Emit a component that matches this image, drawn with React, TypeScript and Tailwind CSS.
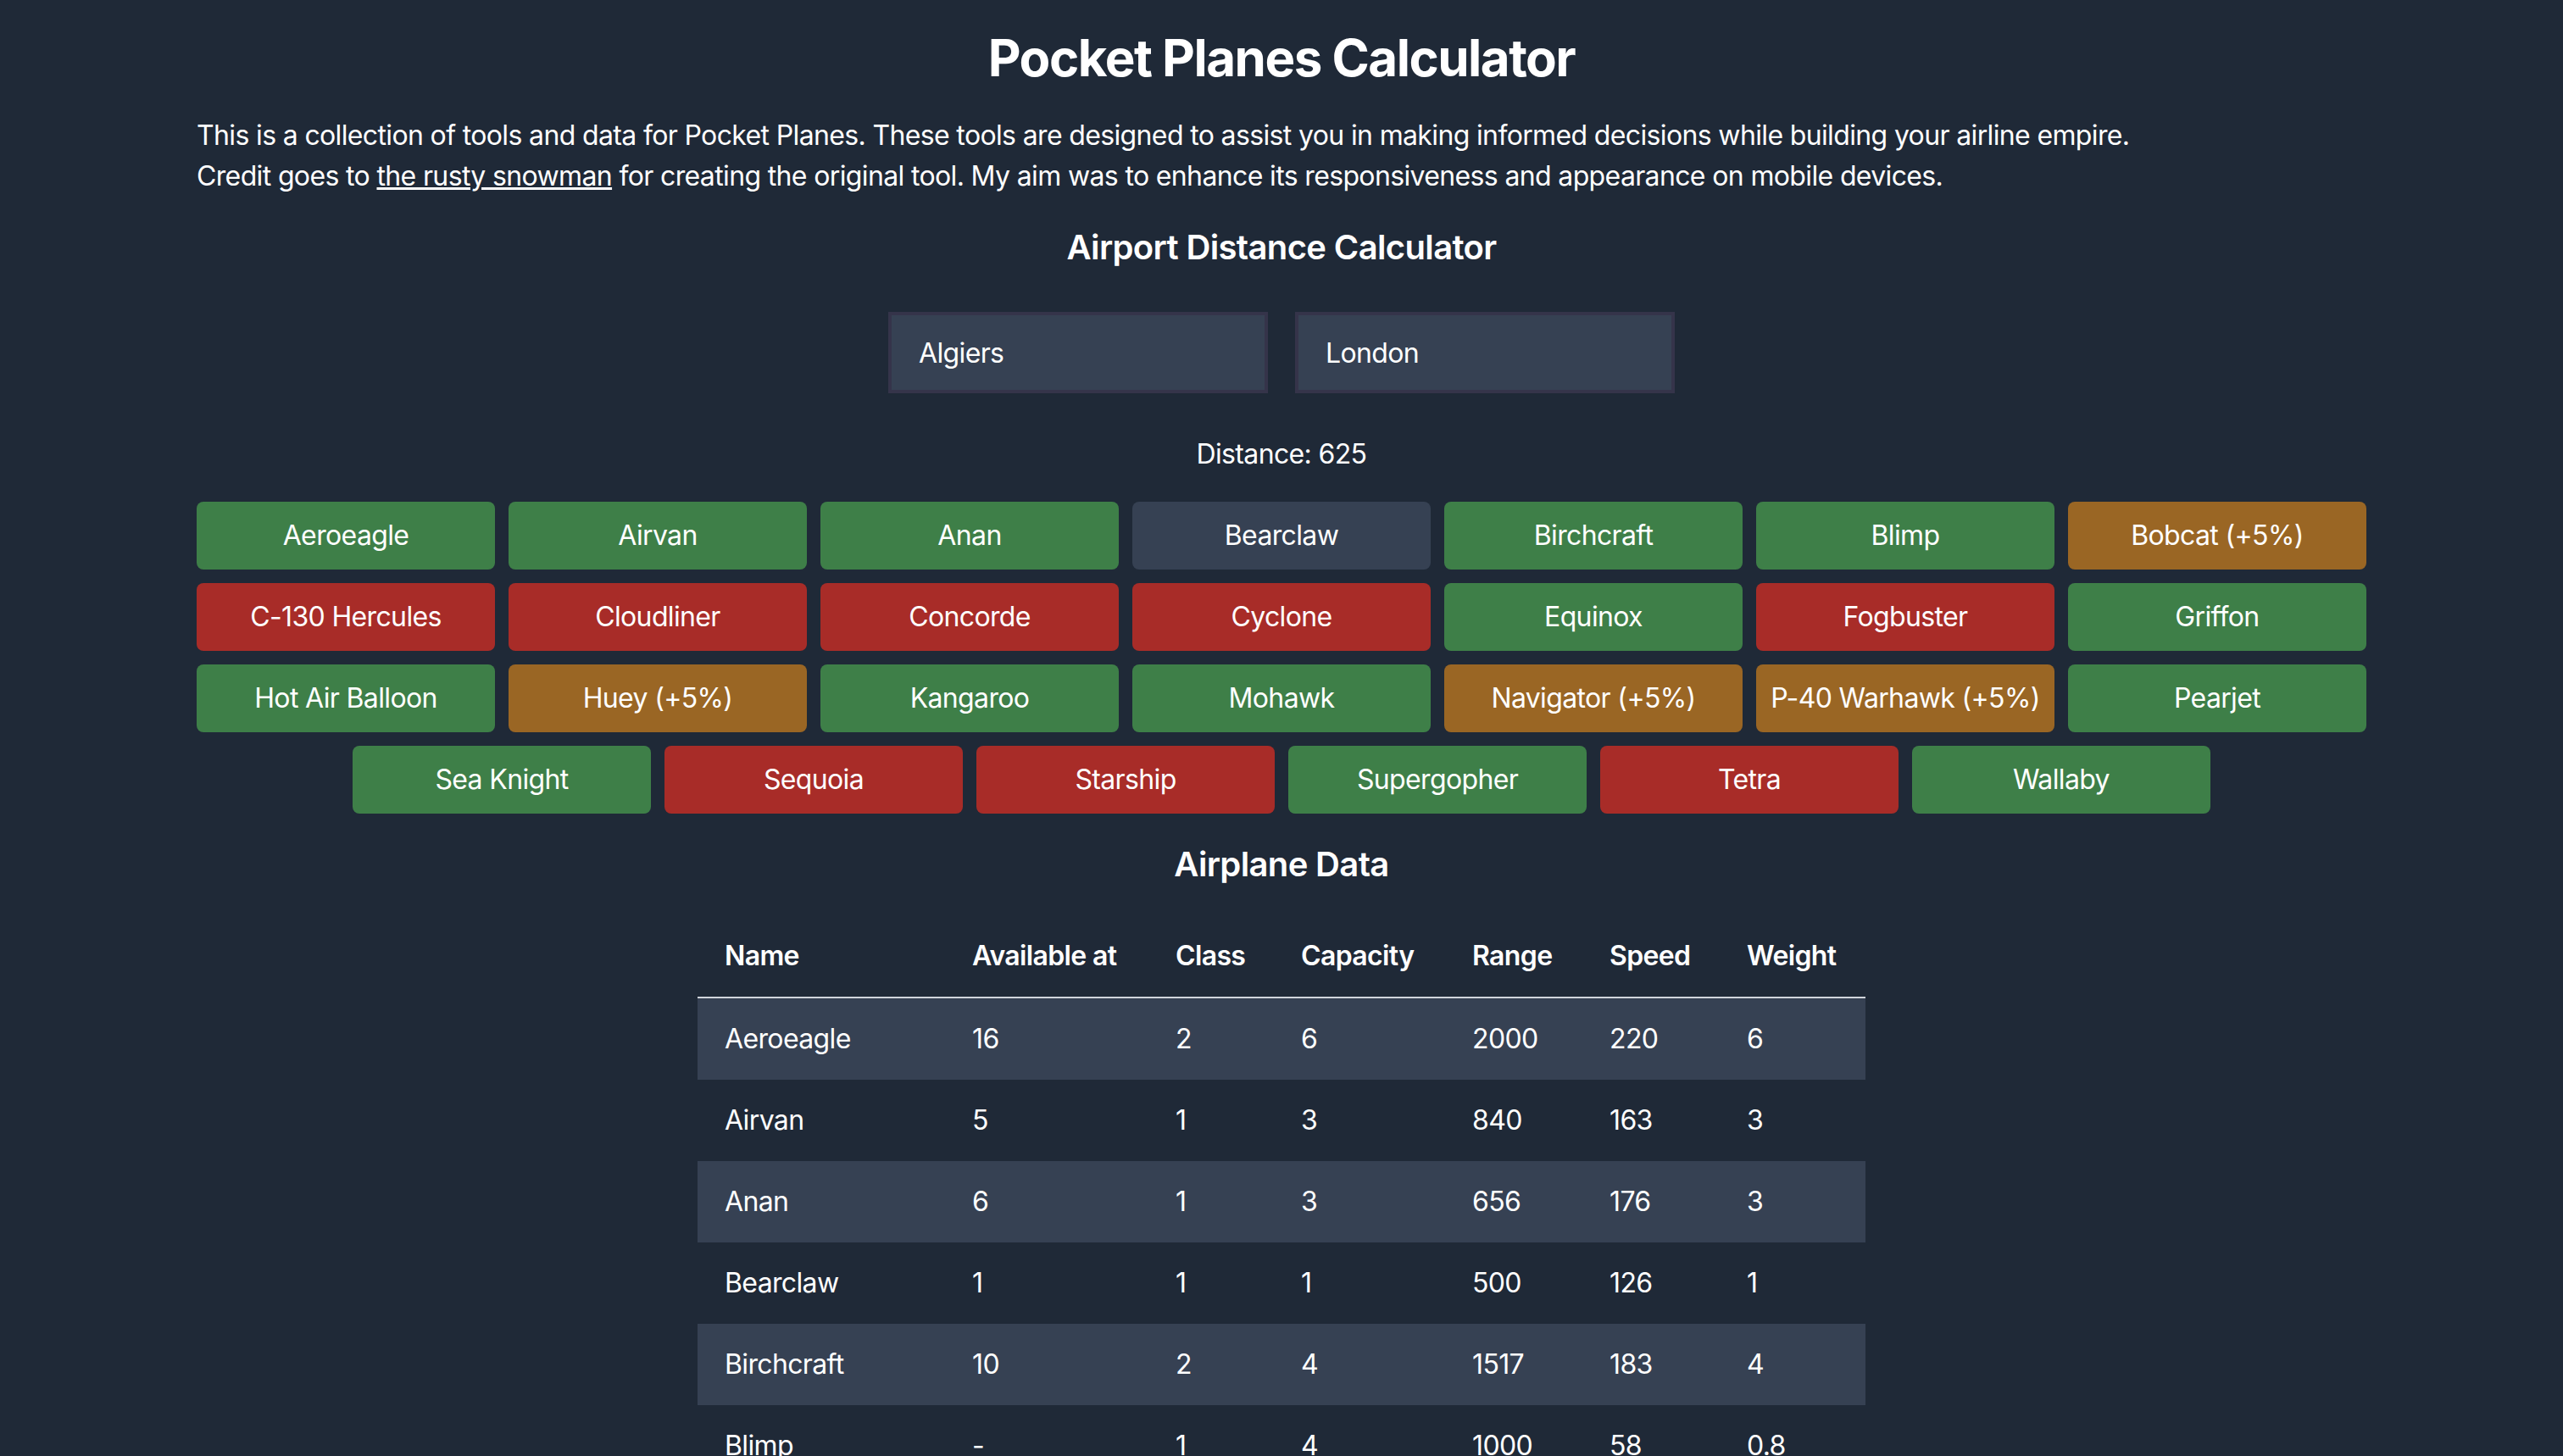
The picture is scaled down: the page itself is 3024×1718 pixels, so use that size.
const planes: { name: string; tone: 'ok' | 'far' | 'bonus' | 'none' }[] = [
  { name: 'Aeroeagle', tone: 'ok' },
  { name: 'Airvan', tone: 'ok' },
  { name: 'Anan', tone: 'ok' },
  { name: 'Bearclaw', tone: 'none' },
  { name: 'Birchcraft', tone: 'ok' },
  { name: 'Blimp', tone: 'ok' },
  { name: 'Bobcat (+5%)', tone: 'bonus' },
  { name: 'C-130 Hercules', tone: 'far' },
  { name: 'Cloudliner', tone: 'far' },
  { name: 'Concorde', tone: 'far' },
  { name: 'Cyclone', tone: 'far' },
  { name: 'Equinox', tone: 'ok' },
  { name: 'Fogbuster', tone: 'far' },
  { name: 'Griffon', tone: 'ok' },
  { name: 'Hot Air Balloon', tone: 'ok' },
  { name: 'Huey (+5%)', tone: 'bonus' },
  { name: 'Kangaroo', tone: 'ok' },
  { name: 'Mohawk', tone: 'ok' },
  { name: 'Navigator (+5%)', tone: 'bonus' },
  { name: 'P-40 Warhawk (+5%)', tone: 'bonus' },
  { name: 'Pearjet', tone: 'ok' },
  { name: 'Sea Knight', tone: 'ok' },
  { name: 'Sequoia', tone: 'far' },
  { name: 'Starship', tone: 'far' },
  { name: 'Supergopher', tone: 'ok' },
  { name: 'Tetra', tone: 'far' },
  { name: 'Wallaby', tone: 'ok' }
];

const toneClass = {
  ok: 'bg-[#3e7f48]',
  far: 'bg-[#a82c28]',
  bonus: 'bg-[#9a6624]',
  none: 'bg-gray-700'
};

const rows = [
  ['Aeroeagle', '16', '2', '6', '2000', '220', '6'],
  ['Airvan', '5', '1', '3', '840', '163', '3'],
  ['Anan', '6', '1', '3', '656', '176', '3'],
  ['Bearclaw', '1', '1', '1', '500', '126', '1'],
  ['Birchcraft', '10', '2', '4', '1517', '183', '4'],
  ['Blimp', '-', '1', '4', '1000', '58', '0.8']
];

const headers = [
  { label: 'Name', w: 'w-[146px]' },
  { label: 'Available at', w: 'w-[120px]' },
  { label: 'Class', w: 'w-[74px]' },
  { label: 'Capacity', w: 'w-[101px]' },
  { label: 'Range', w: 'w-[81px]' },
  { label: 'Speed', w: 'w-[81px]' },
  { label: 'Weight', w: 'w-[86px]' }
];

export default function App() {
  return (
    <div className="min-h-screen bg-[#1f2937] text-white font-['Inter',sans-serif] tracking-[-0.02em]">
      {/* page was captured on a 2x screen */}
      <div className="[zoom:2]">
        <div className="max-w-7xl mx-auto pt-4 pb-10">
          <h1 className="text-3xl font-bold text-center mb-4 tracking-[-0.025em]">Pocket Planes Calculator</h1>
          <p className="text-base">
            This is a collection of tools and data for Pocket Planes. These tools are designed to assist you in making informed decisions while building your airline empire.
            <br />
            Credit goes to <a href="#" className="underline">the rusty snowman</a> for creating the original tool. My aim was to enhance its responsiveness and appearance on mobile devices.
          </p>

          <h2 className="text-xl font-semibold text-center mt-4 mb-6">Airport Distance Calculator</h2>

          <div className="flex justify-center gap-4">
            <input
              defaultValue="Algiers"
              className="w-56 h-12 px-4 bg-gray-700 border-2 border-[#35344a] text-white text-base outline-none"
            />
            <input
              defaultValue="London"
              className="w-56 h-12 px-4 bg-gray-700 border-2 border-[#35344a] text-white text-base outline-none"
            />
          </div>

          <p className="text-center mt-6 mb-4">Distance: 625</p>

          <div className="flex flex-wrap justify-center gap-2">
            {planes.map((p) => (
              <button key={p.name} className={`w-44 h-10 rounded text-base text-white ${toneClass[p.tone]}`}>
                {p.name}
              </button>
            ))}
          </div>

          <h2 className="text-xl font-semibold text-center mt-4 mb-4">Airplane Data</h2>

          <table className="mx-auto text-left table-fixed w-[689px]">
            <thead>
              <tr className="border-b border-gray-300">
                {headers.map((h) => (
                  <th key={h.label} className={`px-4 py-3 font-semibold whitespace-nowrap ${h.w}`}>{h.label}</th>
                ))}
              </tr>
            </thead>
            <tbody>
              {rows.map((r, i) => (
                <tr key={r[0]} className={i % 2 === 0 ? 'bg-gray-700' : ''}>
                  {r.map((c, j) => (
                    <td key={j} className="px-4 py-3">{c}</td>
                  ))}
                </tr>
              ))}
            </tbody>
          </table>
        </div>
      </div>
    </div>
  );
}
